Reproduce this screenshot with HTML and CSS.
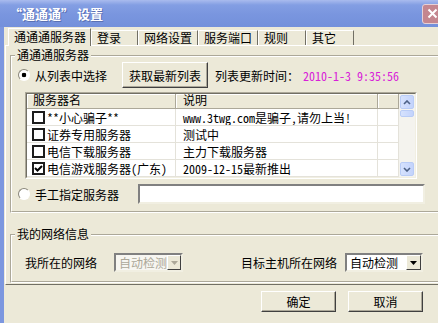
FILE: index.html
```html
<!DOCTYPE html>
<html>
<head>
<meta charset="utf-8">
<title>通通通 设置</title>
<link rel="stylesheet" href="styles.css">
</head>
<body>
<div class="window">
  <div class="titlebar">
    <span class="title">“通通通” 设置</span>
    <span class="close"><svg width="11" height="11" viewBox="0 0 11 11"><path d="M1.5 1.5L9.5 9.5M9.5 1.5L1.5 9.5" stroke="#fff" stroke-width="2"/></svg></span>
  </div>
  <div class="client">
    <div class="tabs">
      <div class="tab active">通通通服务器</div>
      <div class="tab w47">登录</div>
      <div class="tab w60">网络设置</div>
      <div class="tab w60">服务端口</div>
      <div class="tab w48">规则</div>
      <div class="tab w48">其它</div>
    </div>
    <div class="panel">
      <div class="group g1"><div class="group-in">
        <div class="legend">通通通服务器</div>
        <div class="row r1">
          <span class="radio on"></span><span class="lbl">从列表中选择</span>
          <button class="btn get">获取最新列表</button>
          <span class="upd">列表更新时间：</span><span class="time">2010-1-3 9:35:56</span>
        </div>
        <div class="list"><div class="list-in">
          <div class="grid">
            <div class="hdr"><div class="c1">服务器名</div><div class="c2">说明</div><div class="c3"></div></div>
            <div class="item"><div class="c1"><span class="chk"></span>**小心骗子**</div><div class="c2">www.3twg.com是骗子,请勿上当!</div><div class="c3"></div></div>
            <div class="item"><div class="c1"><span class="chk"></span>证券专用服务器</div><div class="c2">测试中</div><div class="c3"></div></div>
            <div class="item"><div class="c1"><span class="chk"></span>电信下载服务器</div><div class="c2">主力下载服务器</div><div class="c3"></div></div>
            <div class="item"><div class="c1"><span class="chk"><svg width="9" height="9" viewBox="0 0 9 9"><path d="M1 4L3.5 6.5L8 2" fill="none" stroke="#000" stroke-width="2"/></svg></span>电信游戏服务器(广东)</div><div class="c2">2009-12-15最新推出</div><div class="c3"></div></div>
          </div>
          <div class="sb">
            <div class="sb-btn up"><svg width="8" height="5" viewBox="0 0 8 5"><path d="M1 4L4 1L7 4" fill="none" stroke="#4D6185" stroke-width="1.6"/></svg></div>
            <div class="sb-thumb"></div>
            <div class="sb-track"></div>
            <div class="sb-btn down"><svg width="8" height="5" viewBox="0 0 8 5"><path d="M1 1L4 4L7 1" fill="none" stroke="#4D6185" stroke-width="1.6"/></svg></div>
          </div>
        </div></div>
        <div class="row r2">
          <span class="radio"></span><span class="lbl">手工指定服务器</span>
          <span class="edit"></span>
        </div>
      </div></div>
      <div class="group g2"><div class="group-in">
        <div class="legend">我的网络信息</div>
        <div class="row r3">
          <span>我所在的网络</span>
          <span class="combo off w69"><span class="val">自动检测</span><span class="arr"><svg width="7" height="4" viewBox="0 0 7 4"><path d="M0 0H7L3.5 4Z" fill="#ACA899"/></svg></span></span>
          <span class="target">目标主机所在网络</span>
          <span class="combo w78"><span class="val">自动检测</span><span class="arr"><svg width="7" height="4" viewBox="0 0 7 4"><path d="M0 0H7L3.5 4Z" fill="#000"/></svg></span></span>
        </div>
      </div></div>
    </div>
    <div class="buttons">
      <button class="btn">确定</button>
      <button class="btn">取消</button>
    </div>
  </div>
</div>
</body>
</html>
```
FILE: styles.css
```css
body {
  margin: 0;
  width: 438px;
  height: 323px;
  overflow: hidden;
  background: #ECE9D8;
  font-family: "Noto Sans Mono CJK SC", "Noto Sans CJK SC", sans-serif;
  font-size: 12px;
  color: #000;
}

.window {
  width: 452px;
}

/* title bar */
.titlebar {
  height: 27px;
  display: flex;
  align-items: center;
  padding-left: 9px;
  background: linear-gradient(#A9BBEE, #839EE3 5px, #7A96DF 14px, #7390DB 27px);
}
.title {
  flex: 1;
  color: #fff;
  font-family: "Noto Sans CJK SC", sans-serif;
  font-weight: bold;
  font-size: 13px;
  line-height: 14px;
  text-shadow: 1px 1px 0 #5A70B2;
}
.close {
  width: 21px;
  height: 20px;
  box-sizing: border-box;
  margin-right: 9px;
  border: 1px solid #E6D0D6;
  border-radius: 3px;
  background: #C4868F;
  display: flex;
  align-items: center;
  justify-content: center;
}

/* client area */
.client {
  border-left: 4px solid #7C97DF;
  padding-top: 1px;
  height: 300px;
}
.tabs {
  display: flex;
  align-items: flex-end;
  height: 17px;
  padding-left: 4px;
}
.tab {
  height: 15px;
  box-sizing: border-box;
  padding-left: 5px;
  line-height: 14px;
  border-top: 1px solid #fff;
  border-left: 1px solid #fff;
  border-right: 1px solid #716F64;
  white-space: nowrap;
}
.tab.active {
  width: 83px;
  height: 18px;
  line-height: 16px;
  margin-bottom: -1px;
  background: #ECE9D8;
  position: relative;
  z-index: 1;
}
.w47 { width: 47px; }
.w48 { width: 48px; }
.w60 { width: 60px; }

.panel {
  margin-left: 1px;
  border-top: 1px solid #fff;
  border-left: 1px solid #fff;
  border-bottom: 1px solid #716F64;
  padding: 0 0 1px 4px;
}

/* group boxes */
.group {
  border: 1px solid;
  border-color: #ACA899 #fff #fff #ACA899;
  margin-right: 4px;
}
.group-in {
  border: 1px solid;
  border-color: #fff #ACA899 #ACA899 #fff;
}
.g1 { margin-top: 9px; }
.g2 { margin-top: 21px; }
.g1 .group-in { padding-bottom: 7px; }
.g2 .group-in { padding-bottom: 9px; }
.legend {
  width: fit-content;
  margin: -8px 0 0 3px;
  padding: 0 2px;
  line-height: 12px;
  background: #ECE9D8;
}

.row {
  display: flex;
  align-items: center;
  white-space: nowrap;
}
.r1 {
  height: 26px;
  margin-top: 1px;
  padding-left: 6px;
}
.r2 {
  height: 20px;
  margin-top: 5px;
  padding-left: 6px;
}
.r3 {
  height: 19px;
  margin-top: 13px;
  padding-left: 13px;
}

.radio {
  width: 12px;
  height: 12px;
  box-sizing: border-box;
  border-radius: 50%;
  border: 1px solid;
  border-color: #8A877A #fff #fff #8A877A;
  background: #fff;
}
.radio.on {
  background: radial-gradient(circle, #000 0 2px, #fff 2.6px);
}
.lbl { margin-left: 5px; }
.upd { margin-left: 7px; }
.time {
  margin-left: 4px;
  color: #D820D8;
}

/* buttons */
.btn {
  font: inherit;
  color: #000;
  width: 75px;
  height: 21px;
  padding: 0;
  background: #ECE9D8;
  border: 1px solid;
  border-color: #fff #404040 #404040 #fff;
  box-shadow: inset -1px -1px 0 #ACA899;
}
.btn.get {
  width: 86px;
  height: 26px;
  margin-left: 15px;
}
.buttons {
  display: flex;
  gap: 12px;
  padding-left: 257px;
  margin-top: 6px;
}

/* list view */
.list {
  margin: 4px 0 0 13px;
  width: 392px;
  height: 87px;
  box-sizing: border-box;
  border: 1px solid;
  border-color: #ACA899 #fff #fff #ACA899;
}
.list-in {
  height: 100%;
  box-sizing: border-box;
  border: 1px solid;
  border-color: #716F64 #F1EFE2 #F1EFE2 #716F64;
  background: #fff;
  display: flex;
}
.grid { width: 372px; }
.hdr, .item {
  display: flex;
  white-space: nowrap;
}
.hdr {
  height: 15px;
  line-height: 12px;
  background: #ECE9D8;
}
.hdr > div {
  box-sizing: border-box;
  border-right: 1px solid #ACA899;
  border-bottom: 1px solid #ACA899;
  box-shadow: inset 1px 1px 0 #fff;
}
.item {
  height: 17px;
  line-height: 14px;
}
.item > div {
  box-sizing: border-box;
  padding-top: 2px;
  border-right: 1px solid #E4E2DA;
  border-bottom: 1px solid #E4E2DA;
  display: flex;
  align-items: flex-start;
  overflow: hidden;
}
.c1 { width: 149px; padding-left: 6px; }
.c2 { width: 202px; padding-left: 7px; }
.c3 { width: 21px; }
.item .c1 { padding-left: 5px; }
.chk {
  width: 13px;
  height: 13px;
  box-sizing: border-box;
  border: 2px solid #1C1C1C;
  background: #fff;
  margin-right: 2px;
  display: flex;
  align-items: center;
  justify-content: center;
}

/* scrollbar */
.sb {
  width: 16px;
  display: flex;
  flex-direction: column;
  background: #F4F3EE;
}
.sb-btn, .sb-thumb {
  margin: 0 1px;
  box-sizing: border-box;
  border: 1px solid #B9CCF6;
  border-radius: 2px;
  background: linear-gradient(90deg, #D6E2FD, #C3D3FC);
}
.sb-btn {
  display: flex;
  align-items: center;
  justify-content: center;
}
.sb-btn.up { height: 14px; margin-top: 1px; }
.sb-btn.down { height: 14px; margin-bottom: 1px; }
.sb-thumb { height: 7px; margin-top: 1px; }
.sb-track { flex: 1; }

/* edit & combo */
.edit {
  margin-left: 19px;
  width: 287px;
  height: 20px;
  box-sizing: border-box;
  background: #fff;
  border: 2px solid;
  border-color: #808080 #F1EFE2 #F1EFE2 #808080;
}
.combo {
  display: flex;
  height: 19px;
  box-sizing: border-box;
  border: 2px solid;
  border-color: #808080 #F1EFE2 #F1EFE2 #808080;
  background: #fff;
}
.combo.w69 { width: 69px; margin-left: 17px; }
.combo.w78 { width: 78px; margin-left: 8px; }
.combo .val {
  flex: 1;
  padding-left: 3px;
  line-height: 15px;
}
.combo .arr {
  width: 15px;
  box-sizing: border-box;
  background: #ECE9D8;
  border: 1px solid;
  border-color: #fff #404040 #404040 #fff;
  display: flex;
  align-items: center;
  justify-content: center;
}
.combo.off { background: #F7F6F1; }
.combo.off .val { color: #ACA899; }
.target { margin-left: 58px; }
```
